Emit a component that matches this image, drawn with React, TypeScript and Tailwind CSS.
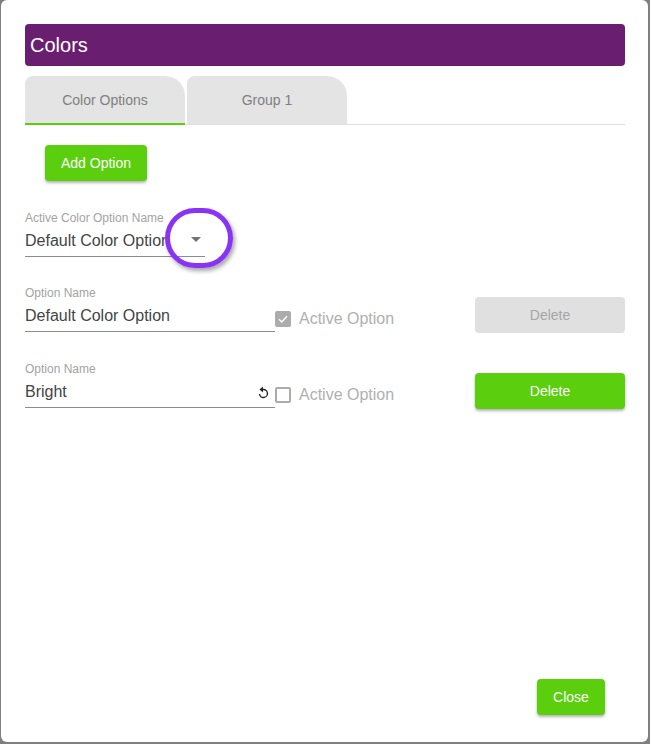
import React from "react";

const sans = { fontFamily: '"Liberation Sans", Arial, sans-serif' };

function DeleteButton({ disabled }: { disabled?: boolean }) {
  return (
    <button
      className={
        disabled
          ? "w-[150px] h-9 rounded bg-[#e0e0e0] text-[#a6a6a6] text-sm"
          : "w-[150px] h-9 rounded bg-[#5bce0e] text-white text-sm shadow-[0_2px_3px_rgba(0,0,0,0.3)]"
      }
    >
      Delete
    </button>
  );
}

function OptionRow({ value, active, reset }: { value: string; active?: boolean; reset?: boolean }) {
  return (
    <div className="flex h-[46px] mb-[30px]">
      <div className="w-[250px] shrink-0 h-[46px] border-b border-[#8c8c8c] relative">
        <div className="text-xs leading-[14px] text-[#a3a3a3]">Option Name</div>
        <div className="text-base leading-[20px] mt-[6px] text-[#444444]">{value}</div>
        {reset && (
          <svg className="absolute right-[5px] top-[23px]" width="14" height="15" viewBox="0 0 14 15" fill="none">
            <path d="M5 4.5h2.5a4 4 0 1 1-4 4.5" stroke="#222" strokeWidth="1.4" />
            <path d="M7 1.5L3.5 4.5L7 7.5Z" fill="#222" />
          </svg>
        )}
      </div>
      <div className="flex items-center h-[46px] pt-[19px] w-[200px] shrink-0">
        {active ? (
          <div className="w-4 h-4 rounded-[2px] bg-[#acacac] flex items-center justify-center">
            <svg width="12" height="12" viewBox="0 0 12 12" fill="none">
              <path d="M2 6.2L4.8 9L10 3.2" stroke="#fff" strokeWidth="1.4" />
            </svg>
          </div>
        ) : (
          <div className="w-4 h-4 rounded-[2px] border-2 border-[#acacac]" />
        )}
        <span className="ml-2 text-base text-[#b0b0b0]">Active Option</span>
      </div>
      <div className="pt-[11px] shrink-0">
        <DeleteButton disabled={active} />
      </div>
    </div>
  );
}

export default function App() {
  return (
    <div className="w-[650px] h-[744px] bg-[#7f7f7f] overflow-hidden" style={sans}>
      <div className="w-[647px] h-[742px] ml-[1px] bg-white rounded-md pl-6 pr-[23px] pt-6 relative">
        <div className="w-[600px] h-[42px] rounded bg-[#6a1e6f] text-white text-xl leading-[42px] px-[5px]">Colors</div>

        <div className="w-[600px] flex gap-[2px] mt-[10px] border-b border-[#e0e0e0] h-[49px]">
          <div className="w-[160px] h-[49px] rounded-tr-[20px] rounded-tl-lg bg-[#e4e4e4] border-b-2 border-[#5bce0e] text-sm text-[#808080] flex items-center justify-center">
            Color Options
          </div>
          <div className="w-[160px] h-[48px] rounded-tr-[20px] rounded-tl-lg bg-[#e4e4e4] text-sm text-[#808080] flex items-center justify-center">
            Group 1
          </div>
        </div>

        <button className="block ml-5 mt-5 w-[102px] h-9 rounded bg-[#5bce0e] text-white text-sm font-medium shadow-[0_2px_3px_rgba(0,0,0,0.3)]">
          Add Option
        </button>

        <div className="w-[180px] h-[46px] mt-[30px] border-b border-[#8c8c8c] relative">
          <div className="text-xs leading-[14px] text-[#a3a3a3] whitespace-nowrap">Active Color Option Name</div>
          <div className="text-base leading-[20px] mt-[6px] text-[#444444] whitespace-nowrap overflow-hidden w-[144px]">
            Default Color Option
          </div>
          <div className="absolute right-[4px] top-[26px] w-0 h-0 border-l-[5px] border-r-[5px] border-t-[5px] border-l-transparent border-r-transparent border-t-[#757575]" />
        </div>
        <div className="absolute left-[164px] top-[208px] w-[68px] h-[60px] rounded-full border-[5px] border-[#8a33f5] shadow-[2px_3px_4px_rgba(0,0,0,0.35)]" />

        <div className="mt-[29px]">
          <OptionRow value="Default Color Option" active />
          <OptionRow value="Bright" reset />
        </div>

        <button className="absolute left-[536px] top-[679px] w-[68px] h-9 rounded bg-[#5bce0e] text-white text-sm font-medium shadow-[0_2px_3px_rgba(0,0,0,0.3)]">
          Close
        </button>
      </div>
    </div>
  );
}
